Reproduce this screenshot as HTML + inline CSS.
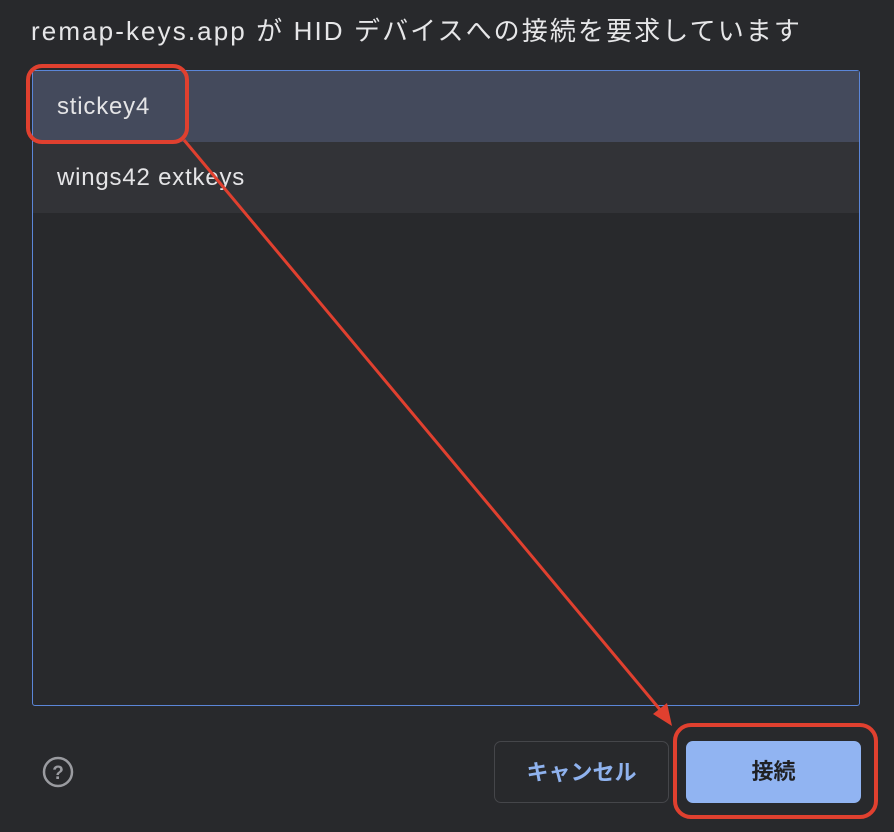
<!DOCTYPE html>
<html><head><meta charset="utf-8"><style>
body{margin:0;width:894px;height:832px;background:#28292c;overflow:hidden;position:relative;font-family:"Liberation Sans","Noto Sans CJK JP",sans-serif;}
.t{position:absolute;left:31px;top:11px;font-size:26px;letter-spacing:2.1px;color:#e6e6e8;white-space:nowrap}
.box{position:absolute;left:32px;top:70px;width:826px;height:634px;border:1px solid #5b86d8;border-radius:3px;background:#28292c}
.r{position:absolute;left:0;width:826px;height:71px;font-size:24px;letter-spacing:0.8px;color:#e4e4e6;line-height:71px;padding-left:24px;box-sizing:border-box}
.b{position:absolute;top:741px;height:62px;border-radius:7px;font-size:22px;font-weight:bold;text-align:center;line-height:62px;box-sizing:border-box}
</style></head><body>
<div class="t">remap-keys.app が HID デバイスへの接続を要求しています</div>
<div class="box">
<div class="r" style="top:0;background:#444a5c">stickey4</div>
<div class="r" style="top:71px;background:#323337">wings42 extkeys</div>
</div>
<div class="b" style="left:494px;width:175px;border:1px solid #45464a;color:#8fb2ee">キャンセル</div>
<div class="b" style="left:686px;width:175px;background:#91b4f2;color:#202124">接続</div>
<svg width="894" height="832" style="position:absolute;left:0;top:0">
<circle cx="58" cy="772" r="14" fill="none" stroke="#9a9ba0" stroke-width="2.5"/>
<text x="58" y="779" font-size="19" font-weight="bold" fill="#9a9ba0" text-anchor="middle" font-family="Liberation Sans">?</text>
<rect x="28" y="66" width="159" height="76" rx="14" fill="none" stroke="#e0402f" stroke-width="4"/>
<rect x="675" y="725" width="201" height="92" rx="16" fill="none" stroke="#e0402f" stroke-width="4"/>
<line x1="184" y1="140" x2="662" y2="712" stroke="#e0402f" stroke-width="3"/>
<polygon points="672,726 653,714 667,703" fill="#e0402f"/>
</svg>
</body></html>
